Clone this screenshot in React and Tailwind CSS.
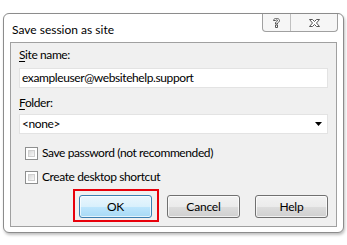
const font = { fontFamily: 'Lato, "Noto Sans", sans-serif' };

const Label = ({ accel, rest }) => (
  <div className="h-4 text-[12px] leading-4 tracking-[-0.4px] text-black">
    <span className="underline underline-offset-2">{accel}</span>
    {rest}
  </div>
);

const Check = ({ label }) => (
  <div className="flex items-center gap-[4px] h-4">
    <div className="w-[13px] h-[13px] border border-[#8e8f8f] bg-white p-[2px]">
      <div className="w-full h-full border border-[#cfcfcf] bg-gradient-to-br from-[#d8d8d8] to-[#f8f8f8]" />
    </div>
    <span className="text-[12px] leading-4 tracking-[-0.4px] text-black">{label}</span>
  </div>
);

const Button = ({ children, primary }) => (
  <button
    className={`w-[73px] h-[23px] rounded-[3px] border text-[12px] leading-4 tracking-[-0.2px] text-black shadow-[inset_0_0_0_1px_rgba(255,255,255,0.7)] ${
      primary
        ? "border-[#3c7fb1] bg-[linear-gradient(#eaf6fd,#d9f0fc_50%,#bee6fd_50%,#a7d9f5)]"
        : "border-[#707070] bg-[linear-gradient(#f2f2f2,#ebebeb_50%,#dddddd_50%,#cfcfcf)]"
    }`}
  >
    {children}
  </button>
);

export default function App() {
  return (
    <div className="w-[347px] h-[245px] bg-white pt-[13px] pl-[3px]" style={font}>
      <div className="w-[341px] h-[220px] rounded-[6px] border border-[#8c8c8c] bg-white shadow-[1px_2px_3px_rgba(0,0,0,0.25)] flex flex-col px-[6px] pb-[5px]">
        <div className="h-[28px] flex items-start justify-between">
          <span className="pl-[2px] pt-[8px] text-[12px] leading-4 text-black">Save session as site</span>
          <div className="flex h-[18px] mr-[-1px] border border-t-0 border-[#a0a0a0] rounded-b-[4px] bg-[#f6f6f6]">
            <div className="w-[28px] flex items-center justify-center border-r border-[#c0c0c0]">
              <svg width="7" height="10" viewBox="0 0 7 10">
                <path
                  d="M0.5 2.5C0.5 1 2 0.5 3.5 0.5S6.5 1 6.5 2.5 5 4.5 4.5 5V6h-2V4.5C3 4 4.5 3.5 4.5 2.5S3 1.8 2.5 2.5z M2.5 7h2v2.5h-2z"
                  fill="white"
                  stroke="#555"
                  strokeWidth="1"
                  strokeLinejoin="round"
                />
              </svg>
            </div>
            <div className="w-[46px] flex items-center justify-center">
              <svg width="11" height="8" viewBox="0 0 11 8">
                <path
                  d="M0.5 0.5h3l2 2 2-2h3l-3 3.5 3 3.5h-3l-2-2-2 2h-3l3-3.5z"
                  fill="white"
                  stroke="#555"
                  strokeWidth="1"
                />
              </svg>
            </div>
          </div>
        </div>
        <div className="flex-1 border border-[#a0a0a0] bg-[#f0f0f0] px-[8px] flex flex-col">
          <div className="mt-[4px]">
            <Label accel="S" rest="ite name:" />
          </div>
          <div className="mt-[5px] h-[20px] border border-[#e3e3e3] bg-white px-[2px] flex items-center text-[12px] leading-4 tracking-[-0.4px] text-black">
            exampleuser@websitehelp.support
          </div>
          <div className="mt-[7px]">
            <Label accel="F" rest="older:" />
          </div>
          <div className="mt-[3px] h-[20px] border border-[#e3e3e3] bg-white pl-[2px] pr-[5px] flex items-center justify-between text-[12px] leading-4 tracking-[-0.4px] text-black">
            <span>&lt;none&gt;</span>
            <svg width="7" height="4" viewBox="0 0 7 4">
              <path d="M0 0h7L3.5 4z" fill="black" />
            </svg>
          </div>
          <div className="mt-[11px] pl-[6px] flex flex-col gap-[8px]">
            <Check label="Save password (not recommended)" />
            <Check label="Create desktop shortcut" />
          </div>
          <div className="mt-[10px] flex justify-end gap-[15px]">
            <div className="relative flex">
              <Button primary>OK</Button>
              <div className="absolute -top-[6px] -bottom-[4px] -left-[6px] -right-[7px] border-2 border-[#e8000b]" />
            </div>
            <Button>Cancel</Button>
            <Button>Help</Button>
          </div>
        </div>
      </div>
    </div>
  );
}
